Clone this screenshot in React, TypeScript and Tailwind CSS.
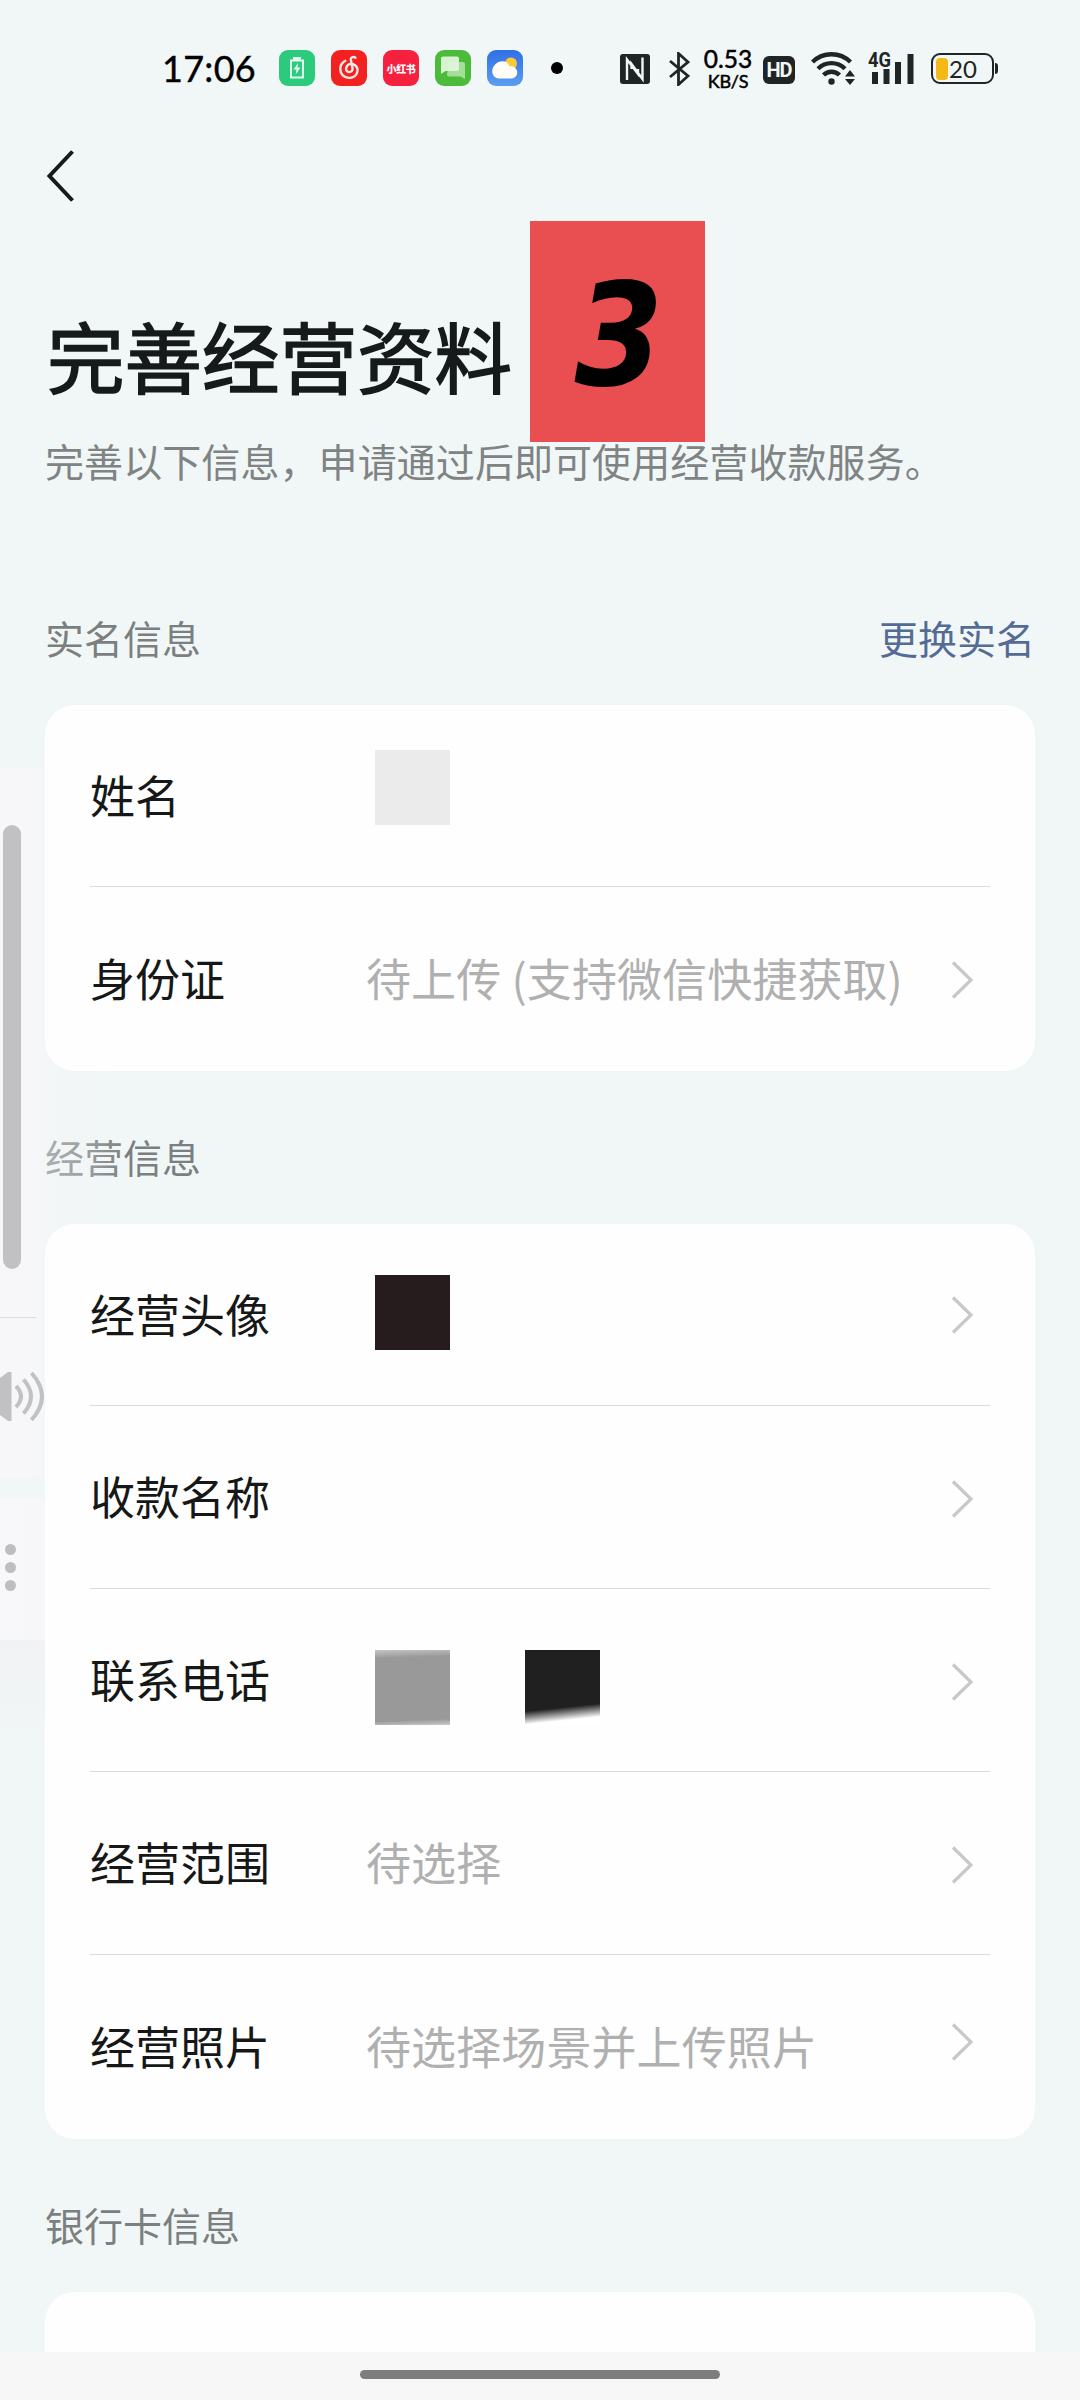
import React from 'react';

interface FormRow {
  label: string;
  placeholder?: string;
  blocks?: React.ReactNode;
  arrow?: boolean;
  className: string;
  arrowClassName?: string;
}

const Block: React.FC<{ className: string }> = ({ className }) => (
  <span className={`block w-[75px] h-[75px] ${className}`} />
);

const identityRows: FormRow[] = [
  { label: '姓名', blocks: <Block className="bg-[#ebebeb] -mt-4" />, className: 'h-[182px] border-b' },
  { label: '身份证', placeholder: '待上传 (支持微信快捷获取)', arrow: true, className: 'h-[184px]', arrowClassName: 'mt-px' },
];

const businessRows: FormRow[] = [
  { label: '经营头像', blocks: <Block className="bg-[#271c1d] -mt-1" />, arrow: true, className: 'h-[182px] border-b', arrowClassName: 'mt-px' },
  { label: '收款名称', arrow: true, className: 'h-[183px] border-b', arrowClassName: 'mt-[3px]' },
  {
    label: '联系电话',
    blocks: (
      <>
        <Block className="mt-[14px] bg-[linear-gradient(178deg,#c4c4c4_0%,#999_11%,#999_92%,#c4c4c4_99%)]" />
        <Block className="mt-[14px] bg-[linear-gradient(174deg,#202020_0%,#202020_74%,#fff_90%)]" />
      </>
    ),
    arrow: true,
    className: 'h-[183px] border-b',
    arrowClassName: 'mt-[3px]',
  },
  { label: '经营范围', placeholder: '待选择', arrow: true, className: 'h-[183px] border-b', arrowClassName: 'mt-[3px]' },
  { label: '经营照片', placeholder: '待选择场景并上传照片', arrow: true, className: 'h-[184px]', arrowClassName: '-mt-[11px]' },
];

const StatusBar: React.FC = () => (
  <header className="h-[132px] pt-[44px] pl-[162px] flex items-start text-black">
    <div className="w-[117px] h-[48px] flex items-center font-['Lato'] text-[36px] tracking-[0.300px] [-webkit-text-stroke:0.4px_black]">17:06</div>
    <div className="flex items-center gap-[16px] h-[48px]">
      <svg width="36" height="36" viewBox="0 0 36 36">
        <rect width="36" height="36" rx="9" fill="#2bca7d" />
        <path d="M14 8.500h8" stroke="#e2fbee" strokeWidth="3" />
        <path d="M12 10.500h12v17H12z" fill="none" stroke="#e2fbee" strokeWidth="2" />
        <path d="M19 13l-4.500 6.500h3l-.8 5 4.800-7h-3z" fill="#e2fbee" />
      </svg>
      <svg width="36" height="36" viewBox="0 0 36 36">
        <rect width="36" height="36" rx="9" fill="#f3211f" />
        <path d="M24.500 7.800c-2.300-1.600-5-.5-4.600 2.100l1.600 8.100c.5 2.600-1.300 4.100-3.200 4.100-2.100 0-3.500-1.700-3.200-3.800.5-3.700 4.200-5.500 7.400-4 3.100 1.400 4.500 4.200 3.900 7.300-.8 4.100-4.200 6.600-8.600 6.300-5-.3-8.700-4.100-8.500-9.200.1-3.300 2-6.200 5-7.900" fill="none" stroke="#ffe9e6" strokeWidth="2.400" strokeLinecap="round" />
      </svg>
      <span className="w-[36px] h-[36px] rounded-[9px] bg-[#f5213f] text-white font-black text-[10px] tracking-[-0.3px] flex items-center justify-center whitespace-nowrap">小红书</span>
      <svg width="36" height="36" viewBox="0 0 36 36">
        <rect width="36" height="36" rx="9" fill="#4cbb3a" />
        <path d="M14 12h14a2 2 0 0 1 2 2v15l-4.500-2.500H14a2 2 0 0 1-2-2z" fill="#a5dd9b" />
        <path d="M8 6.500h14a2 2 0 0 1 2 2v10.500a2 2 0 0 1-2 2H10.500L6 24V8.500a2 2 0 0 1 2-2z" fill="#e1f6dc" fillOpacity=".93" />
      </svg>
      <svg width="36" height="36" viewBox="0 0 36 36">
        <defs>
          <linearGradient id="sky" x1="0" y1="0" x2="0" y2="1">
            <stop stopColor="#2f6fe6" />
            <stop offset="1" stopColor="#5c9df0" />
          </linearGradient>
        </defs>
        <rect width="36" height="36" rx="9" fill="url(#sky)" />
        <circle cx="24" cy="13.500" r="6" fill="#fbc936" />
        <path d="M12 28.500a7 7 0 0 1-6.800-7c0-6.500 6-11 11.500-10.200 3.500.5 5.300 3 6 5.200 4-.8 7.500 2 7.500 6 0 3.600-2.600 6-6.200 6z" fill="#fffdf6" />
      </svg>
    </div>
    <span className="w-3 h-3 mt-[18px] ml-[28px] rounded-full bg-black" />
    <div className="ml-[57px] flex items-start text-[#202425]">
      <svg className="mt-[10px]" width="30" height="30" viewBox="0 0 30 30">
        <rect width="30" height="30" rx="3" fill="currentColor" />
        <path d="M7 26V5.500L18 20v-5M22.500 3.500V25L11.500 10v5" fill="none" stroke="#f1f7f7" strokeWidth="2.400" />
      </svg>
      <svg className="mt-[8px] ml-[19px]" width="21" height="34" viewBox="0 0 21 34">
        <path d="M1 9l18 15-9.500 8.500V1.500L19 10 1 25" fill="none" stroke="currentColor" strokeWidth="2.800" />
      </svg>
      <div className="w-[50px] ml-[13px] mt-[3px] flex flex-col items-center font-['Lato'] text-black [-webkit-text-stroke:0.500px_black]">
        <span className="text-[24.500px] leading-[24px]">0.53</span>
        <span className="text-[18px] leading-[20px] tracking-[-0.200px]">KB/S</span>
      </div>
      <span className="mt-[12px] ml-[10px] w-[32px] h-[28px] rounded-[6px] bg-[#202425] text-[#f1f7f7] font-['Roboto'] font-bold text-[20px] tracking-[-1px] flex items-center justify-center">HD</span>
      <svg className="mt-[7px] ml-[16px]" width="45" height="35" viewBox="0 0 45 35">
        <g fill="none" stroke="currentColor" strokeWidth="4.400">
          <path d="M1.500 11a27 27 0 0 1 38 0" />
          <path d="M7 17.800a19 19 0 0 1 27 0" />
          <path d="M12.500 24a11.500 11.500 0 0 1 16 0" />
        </g>
        <circle cx="20.500" cy="30.500" r="3.200" fill="currentColor" />
        <path d="M34 25.500l5-6.500 5 6.500zM34 28h10l-5 6z" fill="currentColor" />
      </svg>
      <svg className="mt-[7px] ml-[12px] overflow-visible" width="47" height="35" viewBox="0 0 47 35">
        <text x="0" y="15.500" textLength="23" lengthAdjust="spacingAndGlyphs" fontFamily="Roboto" fontWeight="700" fontSize="20" fill="currentColor">4G</text>
        <path d="M4 21h6v12H4zM15.500 18h6v15h-6zM27 11h6v22h-6zM39.500 3h6v30h-6z" fill="currentColor" />
      </svg>
      <div className="mt-[9px] ml-[16px] flex items-center">
        <div className="w-[63px] h-[31px] rounded-[9px] border-[2.500px] border-[#202425] flex items-center pl-[3px]">
          <span className="w-[12px] h-[22px] rounded-[4px] bg-[#f5b915]" />
          <span className="ml-px font-['Lato'] text-[24px] leading-none">20</span>
        </div>
        <span className="ml-px w-[3px] h-[11px] rounded-r bg-[#202425]" />
      </div>
    </div>
  </header>
);

const Chevron: React.FC<{ className?: string }> = ({ className = '' }) => (
  <svg className={`ml-auto mr-[17px] ${className}`} width="22" height="38" viewBox="0 0 22 38">
    <path d="M2 1.500L20 19 2 36.500" fill="none" stroke="#c8c8c8" strokeWidth="3.300" />
  </svg>
);

const FormCard: React.FC<{ rows: FormRow[] }> = ({ rows }) => (
  <section className="relative z-10 mx-[45px] px-[45px] bg-[#fefefe] rounded-[30px]">
    {rows.map(row => (
      <div key={row.label} className={`flex items-center border-[#d8dbdb] text-[45px] leading-none ${row.className}`}>
        <span className="w-[276px] shrink-0 pb-[3px] text-[#161818]">{row.label}</span>
        {row.placeholder && <span className="pb-[3px] text-[#b0b0b0] tracking-[0.100px] whitespace-nowrap">{row.placeholder}</span>}
        {row.blocks && <div className="ml-[9px] flex gap-[75px]">{row.blocks}</div>}
        {row.arrow && <Chevron className={row.arrowClassName} />}
      </div>
    ))}
  </section>
);

const SectionTitle: React.FC<{ title: string; action?: string; className: string }> = ({ title, action, className }) => (
  <div className={`px-[45px] flex items-center justify-between text-[39px] leading-none text-[#7b7f7f] ${className}`}>
    <h2>{title}</h2>
    {action && <button className="text-[#546b95]">{action}</button>}
  </div>
);

// System volume panel sliding in over the left edge
const VolumePanel: React.FC = () => (
  <aside className="absolute left-0 top-[767px] w-[130px]">
    <div className="relative h-[711px] bg-[linear-gradient(to_right,#f7f7f9_0px,#f7f7f9_30px,rgba(246,246,248,0.4)_46px,rgba(244,244,246,0.3)_80px,rgba(243,243,245,0)_128px)]">
      <div className="absolute left-[3px] top-[58px] w-[18px] h-[444px] rounded-full bg-[#c1c1c3]" />
      <div className="absolute left-0 top-[550px] w-[36px] h-px bg-[#dcdcde]" />
      <svg className="absolute left-0 top-[604px]" width="45" height="52" viewBox="0 0 45 52" fill="none" stroke="#c1c1c3">
        <path d="M0 7l8-6h3.500v49H8L0 44z" fill="#c1c1c3" stroke="none" />
        <path d="M16 15q10 10.500 0 21M23.500 8.500q15 17 0 34M31.500 2q21 23.500 0 47" strokeWidth="4" />
      </svg>
    </div>
    <div className="mt-[20px] h-[142px] pt-[46px] pl-[5px] flex flex-col gap-[7px] bg-[linear-gradient(to_right,#f8f8fa_0px,#f7f7f9_45px,rgba(245,245,247,0)_90px)]">
      <span className="w-[11px] h-[11px] rounded-full bg-[#bebec0]" />
      <span className="w-[11px] h-[11px] rounded-full bg-[#bebec0]" />
      <span className="w-[11px] h-[11px] rounded-full bg-[#bebec0]" />
    </div>
    <div className="h-[130px] w-[45px] bg-gradient-to-b from-[#f1f2f4] to-[#f1f7f7]" />
  </aside>
);

export default function App() {
  return (
    <div className="relative w-[1080px] h-[2400px] overflow-hidden flex flex-col bg-[#f1f7f7] font-['Noto_Sans_CJK_SC',sans-serif]">
      <StatusBar />
      <main className="flex-1 min-h-0 overflow-hidden">
        <nav className="h-[168px] pt-[18px] pl-[46px]">
          <svg width="30" height="52" viewBox="0 0 30 52">
            <path d="M26.500 1.500L3.500 26l23 24.500" fill="none" stroke="#161a1a" strokeWidth="4" />
          </svg>
        </nav>
        <div className="relative h-[321px] px-[45px]">
          <h1 className="pt-[14px] pl-[2px] text-[77.500px] leading-[80px] text-[#161a1a] [-webkit-text-stroke:1.600px_#161a1a]">完善经营资料</h1>
          <p className="mt-[44px] text-[39px] leading-[44px] tracking-[0.080px] text-[#7f8383] whitespace-nowrap">完善以下信息，申请通过后即可使用经营收款服务。</p>
          <div className="absolute left-[530px] -top-[79px] w-[175px] h-[221px] pt-[9px] pl-[3px] bg-[#e94f51] flex items-center justify-center font-['DejaVu_Sans_Condensed','DejaVu_Sans'] [font-stretch:condensed] font-bold italic text-[142px] leading-none text-black">3</div>
        </div>
        <SectionTitle title="实名信息" action="更换实名" className="h-[84px] pb-[52px]" />
        <FormCard rows={identityRows} />
        <SectionTitle title="经营信息" className="h-[153px] pt-[18px]" />
        <FormCard rows={businessRows} />
        <SectionTitle title="银行卡信息" className="h-[153px] pt-[18px]" />
        <section className="mx-[45px] h-[120px] rounded-[30px] bg-[#fefefe]" />
      </main>
      <VolumePanel />
      <footer className="h-[48px] shrink-0 bg-[#f7f7f7] flex justify-center pt-[18px]">
        <span className="w-[360px] h-[9px] rounded-full bg-[#7d7d7d]" />
      </footer>
    </div>
  );
}
